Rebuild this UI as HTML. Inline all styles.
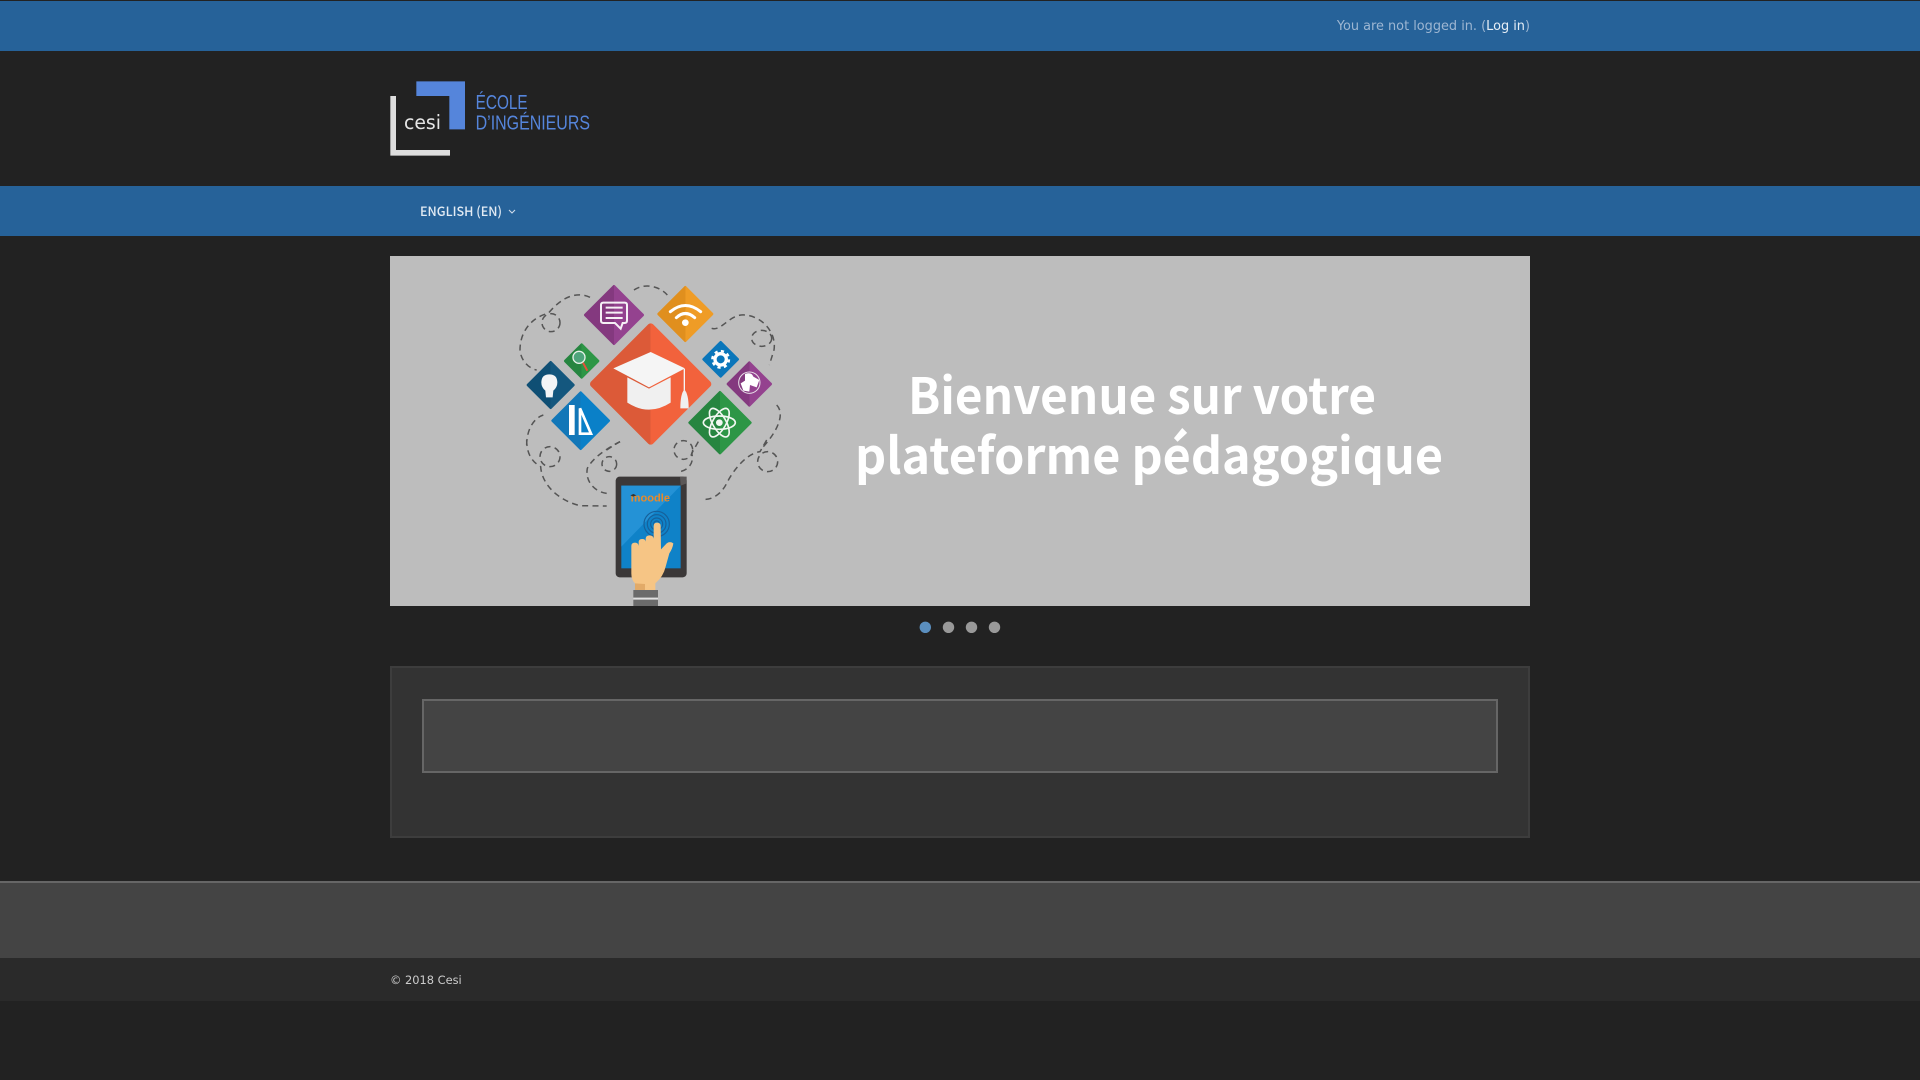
<!DOCTYPE html>
<html lang="en"><head><meta charset="utf-8"><title>Cesi</title>
<style>
html,body{margin:0;padding:0;background:#222;}
body{position:relative;width:1920px;height:1080px;overflow:hidden;font-family:"DejaVu Sans",sans-serif;}
.a{position:absolute;box-sizing:border-box;}
svg{position:absolute;left:0;top:0;}
</style></head><body>
<div class="a" style="left:0;top:1px;width:1920px;height:50px;background:#266299"></div>
<div class="a" style="left:0;top:186px;width:1920px;height:50px;background:#266299"></div>
<div class="a" style="right:390px;top:19px;font-size:12.88px;line-height:16px;color:#9db6d2;white-space:nowrap">You are not logged in. (<span style="color:#e6eef6">Log in</span>)</div>
<div class="a" style="left:390px;top:256px;width:1140px;height:350px;background:#bdbdbd"></div>
<div class="a" style="left:390px;top:666px;width:1140px;height:172px;background:#333;border:2px solid #3d3d3d"></div>
<div class="a" style="left:422px;top:699px;width:1076px;height:74px;background:#444;border:2px solid #666"></div>
<div class="a" style="left:0;top:881px;width:1920px;height:77px;background:#444;border-top:2px solid #666"></div>
<div class="a" style="left:0;top:958px;width:1920px;height:43px;background:#2a2a2a"></div>
<div class="a" style="left:390px;top:973px;font-size:11.4px;line-height:14px;color:#ccc;white-space:nowrap">© 2018 Cesi</div>

<svg width="1920" height="1080" viewBox="0 0 1920 1080">
<defs>
<linearGradient id="gp"><stop offset=".5" stop-color="#84397f"/><stop offset=".5" stop-color="#94428f"/></linearGradient>
<linearGradient id="go"><stop offset=".5" stop-color="#e08f1e"/><stop offset=".5" stop-color="#ef9c26"/></linearGradient>
<linearGradient id="gr"><stop offset=".5" stop-color="#dc5a38"/><stop offset=".5" stop-color="#f2623c"/></linearGradient>
<linearGradient id="gg"><stop offset=".5" stop-color="#268540"/><stop offset=".5" stop-color="#2d9646"/></linearGradient>
<linearGradient id="gd"><stop offset=".5" stop-color="#0f4f74"/><stop offset=".5" stop-color="#14577e"/></linearGradient>
<linearGradient id="gb"><stop offset=".5" stop-color="#1277b8"/><stop offset=".5" stop-color="#0a80c8"/></linearGradient>
<clipPath id="bc"><rect x="390" y="256" width="1140" height="350"/></clipPath>
</defs>

<!-- logo -->
<g transform="translate(370,60) scale(.33333)">
<polygon points="139,64 285,64 285,208 238,208 238,108 139,108" fill="#5585db"/>
<polygon points="61,108 78,108 78,270 240,270 240,287 61,287" fill="#dedede"/>
<text x="102" y="207" font-family="DejaVu Sans" font-size="58" fill="#e6e6e6" textLength="111" lengthAdjust="spacingAndGlyphs">cesi</text>
<text x="317" y="147" font-family="Liberation Sans" font-size="60" fill="#5585db" textLength="156" lengthAdjust="spacingAndGlyphs">ÉCOLE</text>
<text x="317" y="208" font-family="Liberation Sans" font-size="60" fill="#5585db" textLength="343" lengthAdjust="spacingAndGlyphs">D’INGÉNIEURS</text>
</g>

<!-- menu -->
<text x="420" y="216" font-family="Noto Sans CJK JP, Liberation Sans, sans-serif" font-size="13" font-weight="500" fill="#e2ebf4" textLength="82" lengthAdjust="spacingAndGlyphs">ENGLISH (EN)</text>
<polyline points="509,210 512,213 515,210" fill="none" stroke="#cfdcea" stroke-width="1.1"/>

<!-- banner -->
<g clip-path="url(#bc)">
<text x="908" y="414" font-family="Noto Sans CJK JP, Liberation Sans, sans-serif" font-size="50" font-weight="700" fill="#fff" textLength="468" lengthAdjust="spacingAndGlyphs">Bienvenue sur votre</text>
<text x="855" y="474" font-family="Noto Sans CJK JP, Liberation Sans, sans-serif" font-size="50" font-weight="700" fill="#fff" textLength="588" lengthAdjust="spacingAndGlyphs">plateforme pédagogique</text>

<g transform="translate(500,270) scale(.33333)">
<g fill="none" stroke="#555" stroke-width="4.5" stroke-dasharray="18 13">
<path d="M270,82 C235,65 190,75 145,130 C100,140 60,180 60,240 C62,270 85,295 110,300"/>
<circle cx="153" cy="158" r="27"/>
<path d="M402,60 C430,40 475,45 502,75"/>
<path d="M635,175 C665,185 690,130 735,135 C790,140 830,190 822,240 L808,285"/>
<ellipse cx="785" cy="205" rx="30" ry="24"/>
<path d="M830,405 C855,430 835,480 790,530"/>
<path d="M80,525 C80,480 100,445 130,435"/>
<path d="M320,540 C335,530 350,520 360,515"/>
</g>
<polygon points="342,49 428,135 342,221 256,135" fill="url(#gp)" stroke="url(#gp)" stroke-width="8" stroke-linejoin="round"/>
<polygon points="556,52 636,132 556,212 476,132" fill="url(#go)" stroke="url(#go)" stroke-width="8" stroke-linejoin="round"/>
<polygon points="452,170 624,342 452,514 280,342" fill="url(#gr)" stroke="url(#gr)" stroke-width="20" stroke-linejoin="round"/>
<polygon points="245,224 294,273 245,322 196,273" fill="url(#gg)" stroke="url(#gg)" stroke-width="8" stroke-linejoin="round"/>
<polygon points="152,277 220,345 152,413 84,345" fill="url(#gd)" stroke="url(#gd)" stroke-width="8" stroke-linejoin="round"/>
<polygon points="242,368 326,452 242,536 158,452" fill="url(#gb)" stroke="url(#gb)" stroke-width="8" stroke-linejoin="round"/>
<polygon points="662,217 713,268 662,319 611,268" fill="#0a76ba" stroke="#0a76ba" stroke-width="8" stroke-linejoin="round"/>
<polygon points="748,278 812,342 748,406 684,342" fill="url(#gp)" stroke="url(#gp)" stroke-width="8" stroke-linejoin="round"/>
<polygon points="660,367 751,458 660,549 569,458" fill="url(#gg)" stroke="url(#gg)" stroke-width="8" stroke-linejoin="round"/>
<!-- chat -->
<path d="M310,98 H374 Q381,98 381,105 V152 Q381,159 374,159 H368 L362,176 L345,159 H310 Q303,159 303,152 V105 Q303,98 310,98 Z" fill="none" stroke="#f5f0f5" stroke-width="6"/>
<path d="M317,113 H368 M317,128 H368 M317,144 H368" stroke="#f5f0f5" stroke-width="6"/>
<!-- wifi -->
<path d="M511,125 Q556,88 602,125 M529,143 Q556,118 584,143" fill="none" stroke="#fff" stroke-width="9" stroke-linecap="round"/>
<circle cx="556" cy="158" r="10" fill="#fff"/>
<!-- cap -->
<polygon points="340,295 452,246 555,295 447,352" fill="#f5f5f5"/>
<path d="M382,322 L447,356 L512,322 V398 Q447,440 382,398 Z" fill="#f0f0f0"/>
<path d="M553,297 V360" stroke="#f5f5f5" stroke-width="4"/>
<path d="M553,358 Q566,372 566,415 H541 Q541,372 553,358 Z" fill="#f0f0f0"/>
<!-- magnifier -->
<circle cx="237" cy="262" r="18" fill="#4fa57c" stroke="#e8f2ea" stroke-width="4"/>
<path d="M249,278 L262,302" stroke="#e8503a" stroke-width="6"/>
<!-- bulb -->
<path d="M148,313 Q172,313 172,338 Q172,352 160,362 L158,382 H138 L136,362 Q124,352 124,338 Q124,313 148,313 Z" fill="#f3f5f6"/>
<!-- ruler -->
<rect x="207" y="405" width="17" height="90" fill="#fff"/>
<polygon points="240,415 273,491 240,491" fill="none" stroke="#fff" stroke-width="8"/>
<!-- gear -->
<circle cx="662" cy="268" r="17" fill="none" stroke="#fff" stroke-width="10"/>
<circle cx="662" cy="268" r="25" fill="none" stroke="#fff" stroke-width="7" stroke-dasharray="9.6 10"/>
<!-- globe -->
<circle cx="748" cy="338" r="32" fill="none" stroke="#e8dfe8" stroke-width="3"/>
<path d="M735,312 Q755,305 760,320 L778,330 L770,352 L750,345 L748,365 L730,362 L722,340 L735,332 Z" fill="#fff"/>
<!-- atom -->
<g fill="none" stroke="#f2f7f2" stroke-width="5">
<ellipse cx="658" cy="458" rx="48" ry="20"/>
<ellipse cx="658" cy="458" rx="48" ry="20" transform="rotate(60 658 458)"/>
<ellipse cx="658" cy="458" rx="48" ry="20" transform="rotate(120 658 458)"/>
</g>
<circle cx="658" cy="458" r="10" fill="#f2f7f2"/>
</g>

<g transform="translate(500,440) scale(.33333)">
<g fill="none" stroke="#555" stroke-width="4.5" stroke-dasharray="18 13">
<path d="M80,0 C80,40 95,65 122,80 C125,130 170,180 240,197 L320,198"/>
<circle cx="150" cy="50" r="30"/>
<path d="M360,5 C330,20 280,50 262,85 C255,120 280,155 320,160"/>
<circle cx="328" cy="72" r="22"/>
<circle cx="550" cy="30" r="28"/>
<path d="M595,5 L575,40 C585,70 560,95 535,95"/>
<path d="M800,0 L780,35 C740,40 700,90 680,130 C665,160 640,178 615,178"/>
<circle cx="803" cy="65" r="30"/>
</g>
<rect x="347" y="110" width="213" height="302" rx="12" fill="#3b3838"/>
<polygon points="540,110 560,110 560,130 542,137" fill="#5a5757"/>
<rect x="364" y="137" width="178" height="248" fill="#0f82c8"/>
<polygon points="364,137 542,137 364,320" fill="#2492d6"/>
<text x="392" y="185" font-family="Liberation Sans" font-size="32" font-weight="700" fill="#e88a2a" textLength="118" lengthAdjust="spacingAndGlyphs">moodle</text>
<path d="M391,166 L400,162 L409,166 L400,170 Z" fill="#333"/>
<g fill="none" stroke="#16609a" stroke-width="3.5">
<circle cx="470" cy="252" r="38"/><circle cx="470" cy="252" r="28"/><circle cx="470" cy="252" r="18"/><circle cx="470" cy="252" r="9"/>
</g>
<path d="M394,318 Q394,308 405,308 Q415,308 416,318 L416,305 Q417,297 427,297 Q436,297 437,305 L437,295 Q438,286 449,286 Q460,286 461,296 L461,258 Q461,248 471,248 Q482,248 482,258 L483,328 L500,310 Q510,303 520,310 Q518,325 508,340 L497,380 Q490,410 466,430 L466,450 L405,450 L405,430 Q394,420 394,400 Z" fill="#f6c585"/>
<path d="M405,430 L435,432 V450 H405 Z" fill="#e2aa68"/>
<rect x="400" y="450" width="74" height="23" fill="#6b6b6b"/>
<rect x="400" y="473" width="74" height="6" fill="#e0e0e0"/>
<rect x="400" y="479" width="74" height="19" fill="#6b6b6b"/>
</g>
</g>

<!-- dots -->
<circle cx="925.3" cy="627.3" r="5.7" fill="#5b8fbf"/>
<circle cx="948.5" cy="627.3" r="5.7" fill="#999"/>
<circle cx="971.5" cy="627.3" r="5.7" fill="#999"/>
<circle cx="994.5" cy="627.3" r="5.7" fill="#999"/>
</svg>
</body></html>
